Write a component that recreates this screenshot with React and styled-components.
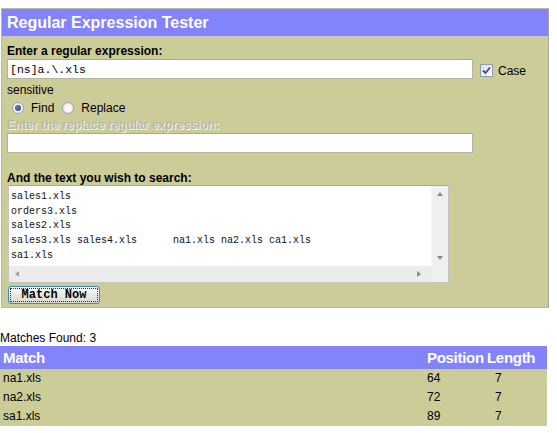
import React from "react";
import styled, { createGlobalStyle } from "styled-components";

const Global = createGlobalStyle`
  html, body { margin: 0; padding: 0; background: #fff; }
  body { font-family: "Liberation Sans", Arial, sans-serif; font-size: 12px; color: #000; }
`;

const Page = styled.div`
  padding-top: 8px;
`;

const Panel = styled.div`
  margin-left: 1px;
  width: 546px;
  border: 1px solid #b8b8b0;
  border-right-color: #a8a8a0;
`;

const Title = styled.div`
  height: 28px;
  box-sizing: border-box;
  background: #8383fb;
  border-bottom: 1px solid #c8c8c8;
  color: #fff;
  font-weight: bold;
  font-size: 16px;
  line-height: 27px;
  padding-left: 5px;
`;

const Body = styled.div`
  background: #cccc99;
  padding: 7px 0 3px 5px;
`;

const Label = styled.div`
  font-weight: bold;
  font-size: 12px;
  line-height: 14px;
  color: ${(p) => (p.$disabled ? "#b8b8a8" : "#000")};
  text-shadow: ${(p) => (p.$disabled ? "1px 1px 0 #f4f4ec" : "none")};
  margin-top: ${(p) => p.$mt || 0}px;
`;

const ExprLine = styled.div`
  margin-top: 1px;
  line-height: 14px;
  width: 540px;
`;

const TextInput = styled.input`
  box-sizing: border-box;
  width: 466px;
  height: 20px;
  margin: 0 0 ${(p) => (p.$inline ? 4 : 2)}px 0;
  padding: 1px 2px;
  border: 1px solid #b4b4a4;
  border-top-color: #a8a8a0;
  background: #fff;
  font-family: "Liberation Mono", "Courier New", monospace;
  font-size: 11.5px;
  color: #000;
  outline: none;
  vertical-align: ${(p) => (p.$inline ? "2px" : "top")};
  display: ${(p) => (p.$inline ? "inline-block" : "block")};
  &:disabled { background: #fff; }
`;

const CaseLabel = styled.span`
  font-size: 12px;
  margin-left: 7px;
`;

const CheckBox = styled.span`
  display: inline-block;
  box-sizing: border-box;
  width: 13px;
  height: 13px;
  border: 1px solid #8f9db2;
  background: linear-gradient(135deg, #dcdce4, #ffffff);
  vertical-align: -2px;
  margin-right: 5px;
  position: relative;
  svg { position: absolute; left: 1px; top: 1px; }
`;

const RadioRow = styled.div`
  margin-top: 4px;
  display: flex;
  align-items: center;
  height: 14px;
  padding-left: 5px;
`;

const Radio = styled.span`
  display: inline-block;
  box-sizing: border-box;
  width: 12px;
  height: 12px;
  border-radius: 50%;
  border: 1px solid #9aa3b4;
  background: radial-gradient(circle at 60% 60%, #fff 0%, #e4e4ea 100%);
  position: relative;
  margin-right: 7px;
  &::after {
    content: "";
    display: ${(p) => (p.$checked ? "block" : "none")};
    position: absolute;
    left: 2px;
    top: 2px;
    width: 6px;
    height: 6px;
    border-radius: 50%;
    background: radial-gradient(circle at 40% 40%, #6a7fb0, #1f3a78);
  }
`;

const RadioText = styled.span`
  font-size: 12px;
  margin-right: 8px;
  line-height: 14px;
`;

const Spacer = styled.div`
  height: ${(p) => p.$h}px;
`;

const TextArea = styled.div`
  margin-left: 1px;
  width: 441px;
  height: 98px;
  box-sizing: border-box;
  border: 1px solid #c4c4c0;
  border-top-color: #a8a8a4;
  background: #fff;
  display: grid;
  grid-template-columns: 1fr 17px;
  grid-template-rows: 1fr 16px;
`;

const TextContent = styled.pre`
  margin: 0;
  padding: 4px 2px 0 2px;
  overflow: hidden;
  font-family: "Liberation Mono", "Courier New", monospace;
  font-size: 10px;
  line-height: 14.7px;
  color: #111;
`;

const VScroll = styled.div`
  background: #f0f0f0;
  border-left: 1px solid #f4f4f4;
  display: flex;
  flex-direction: column;
  justify-content: space-between;
  align-items: center;
  padding: 6px 0 6px;
`;

const HScroll = styled.div`
  background: #ececec;
  display: flex;
  justify-content: space-between;
  align-items: center;
  padding: 0 10px 0 6px;
`;

const Corner = styled.div`
  background: #f0f0f0;
`;

const Arrow = styled.span`
  width: 0;
  height: 0;
  border: 3px solid transparent;
  ${(p) => p.$dir === "up" && "border-bottom: 4px solid #8a8a8a; border-top-width: 0;"}
  ${(p) => p.$dir === "down" && "border-top: 4px solid #8a8a8a; border-bottom-width: 0;"}
  ${(p) => p.$dir === "left" && "border-right: 4px solid #a0a0a0; border-left-width: 0;"}
  ${(p) => p.$dir === "right" && "border-left: 4px solid #8a8a8a; border-right-width: 0;"}
`;

const Button = styled.button`
  margin-top: 3px;
  margin-left: 1px;
  width: 92px;
  height: 18px;
  box-sizing: border-box;
  border: 1px solid #3c8cbc;
  border-radius: 3px;
  background: linear-gradient(#fafafa, #e6e6e0 60%, #d8d8d0);
  padding: 1px;
  font-family: "Liberation Mono", "Courier New", monospace;
  font-weight: bold;
  font-size: 12px;
  color: #000;
  display: block;
  cursor: pointer;
`;

const ButtonInner = styled.span`
  display: block;
  height: 14px;
  line-height: 13px;
  border: 1px dotted #333;
  box-sizing: border-box;
`;

const Found = styled.div`
  margin-top: 23px;
  line-height: 14px;
  font-size: 12px;
`;

const Results = styled.div`
  display: grid;
  grid-template-columns: 424px 60px 63px;
  width: 547px;
  margin-top: 1px;
`;

const HeadCell = styled.div`
  background: #8383fb;
  color: #fff;
  font-weight: bold;
  font-size: 15px;
  letter-spacing: -0.3px;
  height: 23px;
  line-height: 23px;
  padding-left: 3px;
  white-space: nowrap;
`;

const Cell = styled.div`
  background: #cccc99;
  height: 19px;
  line-height: 19px;
  font-size: 12px;
  padding-left: ${(p) => p.$pl ?? 3}px;
`;

const matches = [
  ["na1.xls", 64, 7],
  ["na2.xls", 72, 7],
  ["sa1.xls", 89, 7],
];

const sample = `sales1.xls
orders3.xls
sales2.xls
sales3.xls sales4.xls      na1.xls na2.xls ca1.xls
sa1.xls`;

export default function App() {
  return (
    <Page>
      <Global />
      <Panel>
        <Title>Regular Expression Tester</Title>
        <Body>
          <Label>Enter a regular expression:</Label>
          <ExprLine>
            <TextInput $inline defaultValue="[ns]a.\.xls" />
            <CaseLabel>
              <CheckBox>
                <svg width="9" height="9" viewBox="0 0 9 9">
                  <path d="M1 4.5 L3.5 7 L8 1.5" fill="none" stroke="#2b4a9a" strokeWidth="1.8" />
                </svg>
              </CheckBox>
              Case sensitive
            </CaseLabel>
          </ExprLine>
          <RadioRow>
            <Radio $checked />
            <RadioText>Find</RadioText>
            <Radio />
            <RadioText>Replace</RadioText>
          </RadioRow>
          <Label $disabled $mt={3}>Enter the replace regular expression:</Label>
          <TextInput disabled style={{ marginTop: 1 }} />
          <Spacer $h={16} />
          <Label>And the text you wish to search:</Label>
          <TextArea>
            <TextContent>{sample}</TextContent>
            <VScroll>
              <Arrow $dir="up" />
              <Arrow $dir="down" />
            </VScroll>
            <HScroll>
              <Arrow $dir="left" />
              <Arrow $dir="right" />
            </HScroll>
            <Corner />
          </TextArea>
          <Button>
            <ButtonInner>Match Now</ButtonInner>
          </Button>
        </Body>
      </Panel>
      <Found>Matches Found: 3</Found>
      <Results>
        <HeadCell>Match</HeadCell>
        <HeadCell>Position</HeadCell>
        <HeadCell>Length</HeadCell>
        {matches.map(([m, p, l]) => (
          <React.Fragment key={m}>
            <Cell>{m}</Cell>
            <Cell>{p}</Cell>
            <Cell $pl={11}>{l}</Cell>
          </React.Fragment>
        ))}
      </Results>
    </Page>
  );
}
